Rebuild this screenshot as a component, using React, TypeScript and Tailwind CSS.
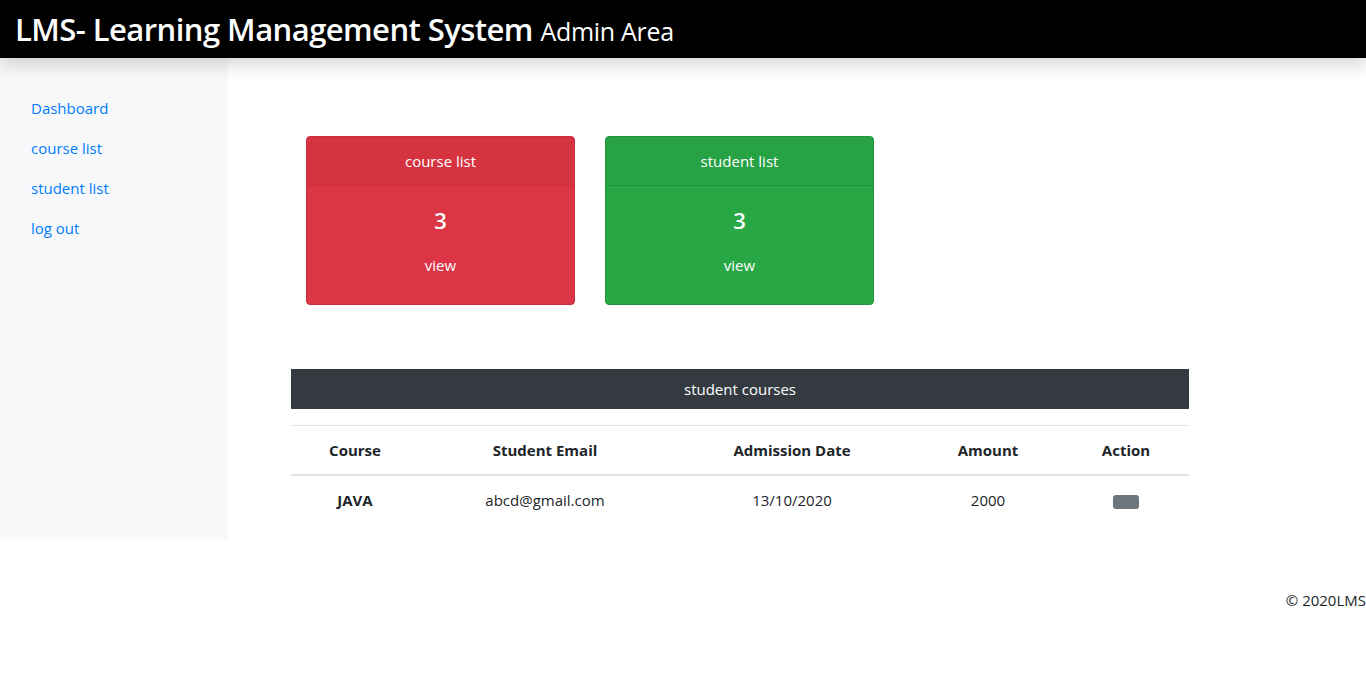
export default function App() {
  const links = ['Dashboard', 'course list', 'student list', 'log out'];
  const cards = [
    { title: 'course list', count: 3, head: 'bg-[#d5333f]', body: 'bg-[#dc3545]', border: 'border-[#c82f3c]' },
    { title: 'student list', count: 3, head: 'bg-[#27a244]', body: 'bg-[#28a745]', border: 'border-[#23923c]' },
  ];

  return (
    <div className="min-h-[697px] bg-white text-[#212529] font-['Open_Sans',sans-serif]">
      <header className="relative z-10 flex h-[58px] items-center bg-black px-[15px] shadow-[0_8px_16px_rgba(0,0,0,0.15)]">
        <h1 className="text-[31px] font-semibold leading-none tracking-[-0.55px] text-white">
          LMS- Learning Management System{' '}
          <span className="text-[25px] font-normal tracking-[-0.3px]">Admin Area</span>
        </h1>
      </header>

      <div className="flex">
        <nav className="h-[482px] w-[228px] shrink-0 bg-[#f8f9fa] pl-[15px] pt-[30px]">
          {links.map((l) => (
            <a key={l} href="#" className="block px-4 py-2 text-[15px] leading-6 text-[#007bff]">
              {l}
            </a>
          ))}
        </nav>

        <main className="flex-1">
          <div className="ml-[78px] mt-[78px] flex gap-[30px]">
            {cards.map((c) => (
              <div key={c.title} className={`w-[269px] overflow-hidden rounded border ${c.border} ${c.body} text-center text-white`}>
                <div className={`${c.head} border-b ${c.border} py-3 text-[15px] leading-6`}>{c.title}</div>
                <div className="pt-5 pb-[27px]">
                  <div className="text-[22px] font-semibold leading-[29px]">{c.count}</div>
                  <a href="#" className="mt-[18px] block text-[15px] leading-6 text-white">view</a>
                </div>
              </div>
            ))}
          </div>

          <div className="ml-[63px] mt-[64px] w-[898px]">
            <div className="flex h-10 items-center justify-center bg-[#343a40] text-[15px] text-white">
              student courses
            </div>
            <table className="mt-4 w-full table-fixed border-collapse text-center text-[15px]">
              <colgroup>
                <col className="w-[128px]" />
                <col className="w-[252px]" />
                <col className="w-[242px]" />
                <col className="w-[150px]" />
                <col className="w-[126px]" />
              </colgroup>
              <thead>
                <tr className="border-t border-b-2 border-[#dee2e6]">
                  <th className="py-3 font-bold leading-6">Course</th>
                  <th className="py-3 font-bold leading-6">Student Email</th>
                  <th className="py-3 font-bold leading-6">Admission Date</th>
                  <th className="py-3 font-bold leading-6">Amount</th>
                  <th className="py-3 font-bold leading-6">Action</th>
                </tr>
              </thead>
              <tbody>
                <tr>
                  <td className="py-3 font-bold leading-6">JAVA</td>
                  <td className="py-3 leading-6">abcd@gmail.com</td>
                  <td className="py-3 leading-6">13/10/2020</td>
                  <td className="py-3 leading-6">2000</td>
                  <td className="py-3 leading-6">
                    <button className="inline-block h-[14px] w-[26px] rounded-[3px] bg-[#6c757d] align-middle"></button>
                  </td>
                </tr>
              </tbody>
            </table>
          </div>
        </main>
      </div>

      <footer className="pt-12 text-right text-[15px] leading-6">© 2020LMS</footer>
    </div>
  );
}
